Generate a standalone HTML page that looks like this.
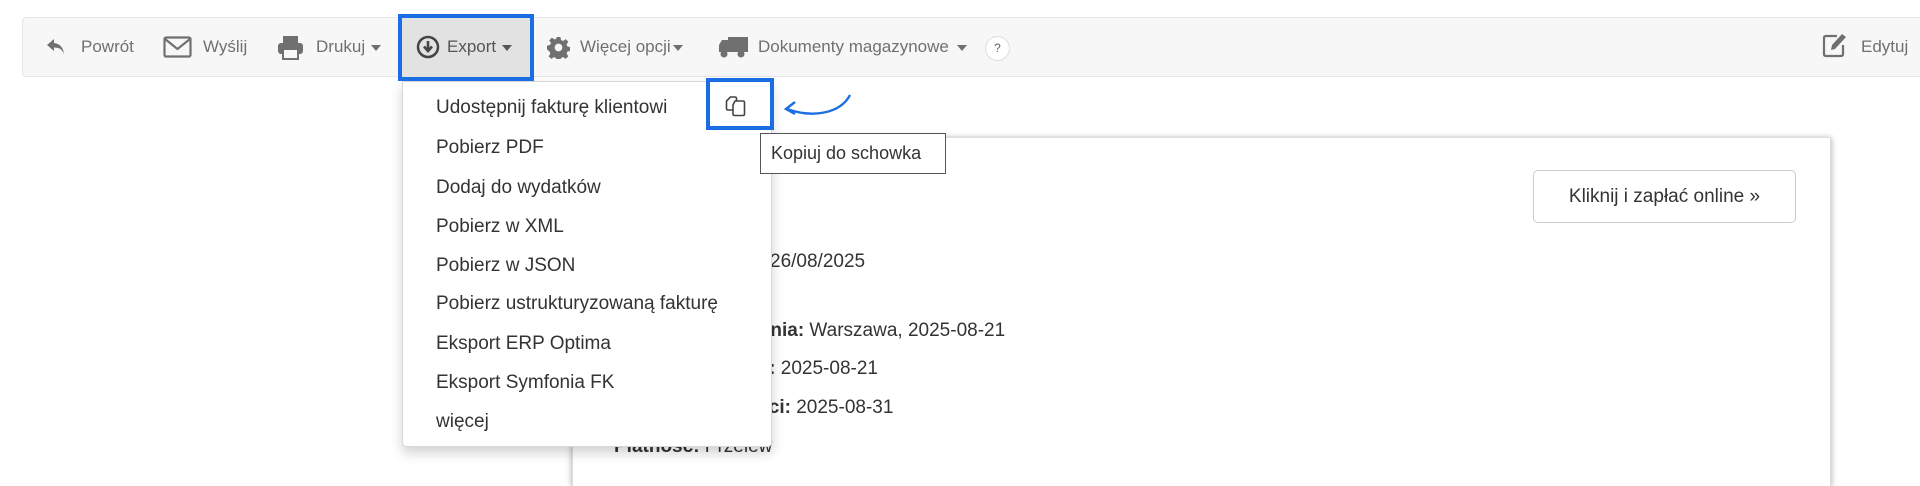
<!DOCTYPE html>
<html style="height:486px;overflow:hidden"><head><meta charset="utf-8"><style>
*{box-sizing:border-box;margin:0;padding:0}
body{width:1920px;height:486px;background:#fff;position:relative;overflow:hidden;font-family:"Liberation Sans",Arial,sans-serif;color:#333}
.abs{position:absolute;white-space:nowrap}
.tb{position:absolute;left:22px;top:17px;width:1898px;height:60px;background:#f7f7f7;border:1px solid #e6e6e6;border-right:none;border-radius:4px 0 0 4px}
.ti{font-size:17px;color:#707070;top:37px}
.car{display:inline-block;width:0;height:0;border-left:5px solid transparent;border-right:5px solid transparent;border-top:6px solid #707070;vertical-align:middle;margin-left:6px}
.panel{position:absolute;left:572px;top:137px;width:1259px;height:349px;background:#fff;border:1px solid #ddd;border-bottom:none;box-shadow:0 1px 6px rgba(0,0,0,.35)}
.menu{position:absolute;left:402px;top:81px;width:370px;height:366px;background:#fff;border:1px solid #d8d8d8;border-radius:0 0 4px 4px;box-shadow:0 6px 12px rgba(0,0,0,.18);z-index:5}
.mi{position:absolute;left:33px;font-size:19px;color:#333}
.blue{position:absolute;border:4px solid #1a6de3;z-index:7}
.t{font-size:19px;color:#333}
</style></head><body>
<div class="tb"></div>
<div class="abs" style="left:401px;top:18px;width:129px;height:59px;background:#e2e2e2"></div>

<svg class="abs" style="left:46px;top:38px" width="20" height="18" viewBox="0 0 20 18"><path d="M8 1 L1 7 L8 13 V9.5 C13 9.5 16 11 18 16 C17.5 10 14 5.5 8 5 Z" fill="#707070"/></svg>
<div class="abs ti" style="left:81px">Powrót</div>
<svg class="abs" style="left:163px;top:36px" width="29" height="22" viewBox="0 0 29 22"><rect x="1.5" y="1.5" width="26" height="19" rx="1.5" fill="none" stroke="#707070" stroke-width="2.2"/><path d="M2 3 L14.5 13 L27 3" fill="none" stroke="#707070" stroke-width="2.2"/></svg>
<div class="abs ti" style="left:203px">Wyślij</div>
<svg class="abs" style="left:277px;top:35px" width="27" height="25" viewBox="0 0 27 25"><rect x="6" y="1" width="15" height="7" fill="#707070"/><rect x="1" y="8" width="25" height="11" rx="3" fill="#707070"/><rect x="6" y="14" width="15" height="10" fill="#f7f7f7" stroke="#707070" stroke-width="2"/></svg>
<div class="abs ti" style="left:316px">Drukuj<span class="car"></span></div>

<svg class="abs" style="left:416px;top:35px" width="24" height="24" viewBox="0 0 24 24"><circle cx="12" cy="12" r="10" fill="none" stroke="#444" stroke-width="2.5"/><path d="M12 6 V15 M8 11.5 L12 16 L16 11.5" fill="none" stroke="#444" stroke-width="2.6"/></svg>
<div class="abs ti" style="left:447px;color:#555">Export<span class="car" style="border-top-color:#555"></span></div>

<svg class="abs" style="left:547px;top:36px" width="23" height="23" viewBox="0 0 24 24"><path fill="#707070" d="M10 1h4l.6 3.2 2.2 1 2.7-1.9 2.8 2.8-1.9 2.7 1 2.2 3.2.6v4l-3.2.6-1 2.2 1.9 2.7-2.8 2.8-2.7-1.9-2.2 1-.6 3.2h-4l-.6-3.2-2.2-1-2.7 1.9-2.8-2.8 1.9-2.7-1-2.2L0 14v-4l3.2-.6 1-2.2-1.9-2.7 2.8-2.8 2.7 1.9 2.2-1zM12 8a4 4 0 100 8 4 4 0 000-8z"/></svg>
<div class="abs ti" style="left:580px">Więcej opcji<span class="car" style="margin-left:2px"></span></div>

<svg class="abs" style="left:718px;top:36px" width="30" height="22" viewBox="0 0 30 22"><rect x="10" y="1" width="20" height="15" fill="#707070"/><path d="M1 9 L4 4 H10 V16 H1 Z" fill="#707070"/><circle cx="6" cy="18" r="3.5" fill="#707070"/><circle cx="23" cy="18" r="3.5" fill="#707070"/></svg>
<div class="abs ti" style="left:758px">Dokumenty magazynowe<span class="car" style="margin-left:8px"></span></div>
<div class="abs" style="left:985px;top:36px;width:25px;height:25px;border-radius:50%;background:#fff;border:1px solid #ddd;font-size:12px;color:#666;text-align:center;line-height:23px">?</div>

<svg class="abs" style="left:1822px;top:32px" width="26" height="26" viewBox="0 0 26 26"><path d="M15 4 H4 Q2 4 2 6 V22 Q2 24 4 24 H19 Q21 24 21 22 V13" fill="none" stroke="#707070" stroke-width="2.2"/><path d="M9 18 L10 13 L20 2 L24 5 L13 17 Z" fill="#707070"/></svg>
<div class="abs ti" style="left:1861px">Edytuj</div>

<div class="blue" style="left:398px;top:14px;width:136px;height:67px"></div>

<div class="panel"></div>
<div class="abs" style="left:1533px;top:170px;width:263px;height:53px;border:1px solid #ccc;border-radius:5px;font-size:19px;color:#333;text-align:center;line-height:51px">Kliknij i zapłać online »</div>
<div class="abs t" style="left:770px;top:251px">26/08/2025</div>
<div class="abs t" style="left:613px;top:320px"><b>Miejsce wystawienia:</b> Warszawa, 2025-08-21</div>
<div class="abs t" style="left:728px;top:358px"><b>Data:</b> 2025-08-21</div>
<div class="abs t" style="left:634px;top:397px"><b>Termin płatności:</b> 2025-08-31</div>
<div class="abs t" style="left:614px;top:436px"><b>Płatność:</b> Przelew</div>

<div class="menu">
<div class="mi" style="top:15px">Udostępnij fakturę klientowi</div>
<div class="mi" style="top:55px">Pobierz PDF</div>
<div class="mi" style="top:95px">Dodaj do wydatków</div>
<div class="mi" style="top:134px">Pobierz w XML</div>
<div class="mi" style="top:173px">Pobierz w JSON</div>
<div class="mi" style="top:211px">Pobierz ustrukturyzowaną fakturę</div>
<div class="mi" style="top:251px">Eksport ERP Optima</div>
<div class="mi" style="top:290px">Eksport Symfonia FK</div>
<div class="mi" style="top:329px">więcej</div>
</div>

<div class="blue" style="left:706px;top:78px;width:68px;height:52px;background:#fff"></div>
<svg class="abs" style="left:725px;top:95px;z-index:8" width="24" height="22" viewBox="0 0 24 22"><path d="M8 15 H3 Q1.5 15 1.5 13.5 V6 L5.5 2 H10 Q11.5 2 11.5 3.5 V6" fill="none" stroke="#444" stroke-width="1.6"/><path d="M10 6 H18 Q19.5 6 19.5 7.5 V19 Q19.5 20.5 18 20.5 H9.5 Q8 20.5 8 19 V10 Z" fill="#fff" stroke="#444" stroke-width="1.6"/></svg>
<svg class="abs" style="left:782px;top:92px;z-index:8" width="72" height="30" viewBox="0 0 72 30"><path d="M68 3 C58 22 30 26 5 17" fill="none" stroke="#1a6de3" stroke-width="2.4"/><path d="M13 10 L4 17 L13 22" fill="none" stroke="#1a6de3" stroke-width="2.4"/></svg>
<div class="abs" style="left:760px;top:133px;width:186px;height:41px;background:#fff;border:1.5px solid #555;font-size:18px;color:#333;line-height:38px;padding-left:10px;z-index:8">Kopiuj do schowka</div>
</body></html>
